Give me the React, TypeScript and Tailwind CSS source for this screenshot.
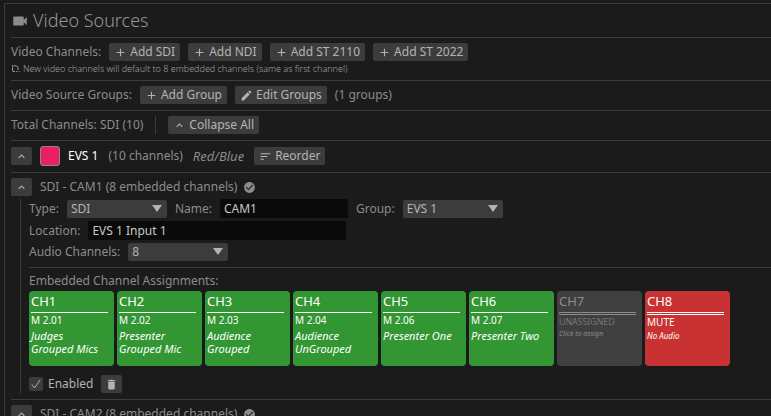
import { useState } from 'react'
import type { ReactNode } from 'react'
import clsx from 'clsx'
import { MdAdd, MdCheckCircle, MdDelete, MdEdit, MdKeyboardArrowUp, MdSort, MdVideocam } from 'react-icons/md'

type CardKind = 'mapped' | 'unassigned' | 'mute'

interface Assignment {
  channel: string
  kind: CardKind
  source: string
  label: string
}

const ASSIGNMENTS: Assignment[] = [
  { channel: 'CH1', kind: 'mapped', source: 'M 2.01', label: 'Judges\nGrouped Mics' },
  { channel: 'CH2', kind: 'mapped', source: 'M 2.02', label: 'Presenter\nGrouped Mic' },
  { channel: 'CH3', kind: 'mapped', source: 'M 2.03', label: 'Audience\nGrouped' },
  { channel: 'CH4', kind: 'mapped', source: 'M 2.04', label: 'Audience\nUnGrouped' },
  { channel: 'CH5', kind: 'mapped', source: 'M 2.06', label: 'Presenter One' },
  { channel: 'CH6', kind: 'mapped', source: 'M 2.07', label: 'Presenter Two' },
  { channel: 'CH7', kind: 'unassigned', source: 'UNASSIGNED', label: 'Click to assign' },
  { channel: 'CH8', kind: 'mute', source: 'MUTE', label: 'No Audio' },
]

const CARD_COLORS: Record<CardKind, string> = {
  mapped:     'bg-[#329632] text-white border-white',
  unassigned: 'bg-[#404040] text-[#8c8c8c] border-[#8c8c8c]',
  mute:       'bg-[#c83232] text-white border-white',
}

const SOURCE_STYLES: Record<CardKind, string> = {
  mapped:     'text-[10px] leading-[14px]',
  unassigned: 'text-[9px] leading-[13px] font-light',
  mute:       'text-[10px] leading-[15px]',
}

const LABEL_STYLES: Record<CardKind, string> = {
  mapped:     'mt-[2px] text-[11px] leading-[13px]',
  unassigned: 'text-[7px] leading-[11px]',
  mute:       'text-[8px] leading-[12px]',
}

function Separator() {
  return <hr className="mt-[6px] mb-[5px] border-t border-[#3c3c3c]" />
}

function Button({ icon, children }: { icon: ReactNode; children: ReactNode }) {
  return (
    <button className="flex h-[18px] shrink-0 items-center gap-[3px] rounded-[2px] bg-[#3c3c3c] px-[5px] text-[#b4b4b4] hover:bg-[#464646]">
      {icon}
      {children}
    </button>
  )
}

function CollapseButton({ label }: { label: string }) {
  return (
    <button aria-label={label} className="flex h-[18px] w-[21px] shrink-0 items-center justify-center rounded-[2px] bg-[#3c3c3c] text-[#b4b4b4]">
      <MdKeyboardArrowUp size={13} />
    </button>
  )
}

function Select({ id, options }: { id: string; options: string[] }) {
  return (
    <div className="relative flex">
      <select id={id} className="h-[18px] w-[100px] appearance-none rounded-[2px] bg-[#3c3c3c] px-1 leading-[18px] text-[#b4b4b4] outline-none">
        {options.map((o) => <option key={o}>{o}</option>)}
      </select>
      <svg viewBox="0 0 10 7" className="pointer-events-none absolute top-[5px] right-[5px] h-[7px] w-[10px] fill-[#b4b4b4]">
        <path d="M0 0h10L5 7z" />
      </svg>
    </div>
  )
}

function AssignmentCard({ item }: { item: Assignment }) {
  return (
    <button className={clsx('flex h-[75px] w-[85px] shrink-0 flex-col items-start rounded-[4px] px-[2px] pt-[2px] text-left', CARD_COLORS[item.kind])}>
      <span className="text-[13px] leading-[17px]">{item.channel}</span>
      <span className={clsx('mt-[2px] w-[77px] shrink-0 border-inherit', item.kind === 'mapped' ? 'border-t' : 'h-[3px] border-y')} />
      <span className={SOURCE_STYLES[item.kind]}>{item.source}</span>
      <span className={clsx('whitespace-pre-line italic', LABEL_STYLES[item.kind])}>{item.label}</span>
    </button>
  )
}

export default function App() {
  const [name, setName]         = useState('CAM1')
  const [location, setLocation] = useState('EVS 1 Input 1')
  const [enabled, setEnabled]   = useState(true)

  return (
    <div className="h-screen overflow-hidden bg-[#1b1b1b] pt-[3px] pl-1 font-['Noto_Sans','Open_Sans',sans-serif] text-[12px] leading-[18px] whitespace-nowrap text-[#8c8c8c]">
      <main className="rounded-tl-[2px] border-t border-l border-[#3c3c3c] pt-[6px] pl-[6px]">
        <h1 className="flex h-[21px] items-center gap-1 text-[18px] leading-[21px] font-light text-[#969696]">
          <MdVideocam size={18} className="text-[#8c8c8c]" />
          Video Sources
        </h1>

        <Separator />

        {/* Add channels */}
        <div className="flex items-center gap-2">
          <span>Video Channels:</span>
          <Button icon={<MdAdd size={13} />}>Add SDI</Button>
          <Button icon={<MdAdd size={13} />}>Add NDI</Button>
          <Button icon={<MdAdd size={13} />}>Add ST 2110</Button>
          <Button icon={<MdAdd size={13} />}>Add ST 2022</Button>
        </div>
        <p className="mt-[2px] flex h-[11px] items-center gap-[3px] text-[9px] leading-[11px] font-light text-[#a0a0a0]">
          <svg viewBox="0 0 9 9" className="h-[9px] w-[9px] fill-none stroke-current">
            <path d="M4 7.500H2L1.500 6V3.500C1.500 1.200 7 1.200 7 3.500V6M5 7.500H6M7.500 7.500H8.500M1 1.500H2" />
          </svg>
          New video channels will default to 8 embedded channels (same as first channel)
        </p>

        <Separator />

        {/* Groups */}
        <div className="flex items-center gap-2">
          <span>Video Source Groups:</span>
          <Button icon={<MdAdd size={13} />}>Add Group</Button>
          <Button icon={<MdEdit size={13} />}>Edit Groups</Button>
          <span>(1 groups)</span>
        </div>

        <Separator />

        <div className="flex items-center gap-3">
          <span>Total Channels: SDI (10)</span>
          <span className="h-[18px] w-px bg-[#3c3c3c]" />
          <Button icon={<MdKeyboardArrowUp size={13} />}>Collapse All</Button>
        </div>

        <Separator />

        {/* Group header */}
        <div className="flex h-5 items-center gap-2">
          <CollapseButton label="Collapse EVS 1" />
          <button aria-label="Group color" className="h-5 w-5 rounded-[3px] border border-[#8c8c8c] bg-[#e91e63]" />
          <div className="flex items-center gap-[10px]">
            <span className="text-white">EVS 1</span>
            <span>(10 channels)</span>
            <span className="text-[13px] italic">Red/Blue</span>
            <Button icon={<MdSort size={13} />}>Reorder</Button>
          </div>
        </div>

        <Separator />

        {/* CAM1 */}
        <section>
          <div className="flex items-center">
            <CollapseButton label="Collapse CAM1" />
            <span className="ml-2">SDI - CAM1 (8 embedded channels)</span>
            <MdCheckCircle size={13} className="ml-[6px]" />
          </div>

          <div className="mt-[3px] ml-[9px] border-l border-[#3c3c3c] pl-2">
            <div className="flex items-center gap-2">
              <label htmlFor="type">Type:</label>
              <Select id="type" options={['SDI', 'NDI', 'ST 2110', 'ST 2022']} />
              <label htmlFor="name">Name:</label>
              <input
                id="name"
                value={name}
                onChange={(e) => setName(e.target.value)}
                className="h-[19px] w-[128px] rounded-[2px] bg-[#0a0a0a] px-1 text-[#c8c8c8] outline-none"
              />
              <label htmlFor="group">Group:</label>
              <Select id="group" options={['EVS 1']} />
            </div>
            <div className="mt-[3px] flex items-center gap-2">
              <label htmlFor="location">Location:</label>
              <input
                id="location"
                value={location}
                onChange={(e) => setLocation(e.target.value)}
                className="h-[19px] w-[258px] rounded-[2px] bg-[#0a0a0a] px-1 text-[#c8c8c8] outline-none"
              />
            </div>
            <div className="mt-[3px] flex items-center gap-2">
              <label htmlFor="audio">Audio Channels:</label>
              <Select id="audio" options={['8', '16']} />
            </div>

            <Separator />

            <h2 className="h-[18px] leading-[16px]">Embedded Channel Assignments:</h2>
            <div className="flex gap-[3px]">
              {ASSIGNMENTS.map((item) => <AssignmentCard key={item.channel} item={item} />)}
            </div>

            <div className="mt-[9px] flex items-center gap-2">
              <label className="relative flex items-center gap-[5px] text-[#b4b4b4]">
                <input
                  type="checkbox"
                  checked={enabled}
                  onChange={(e) => setEnabled(e.target.checked)}
                  className="peer h-[14px] w-[14px] appearance-none rounded-[2px] bg-[#3c3c3c]"
                />
                <svg viewBox="0 0 14 14" className="pointer-events-none absolute left-0 hidden h-[14px] w-[14px] fill-none stroke-[#b4b4b4] peer-checked:block">
                  <path d="M3 7.500L5.500 11L11 3" />
                </svg>
                Enabled
              </label>
              <button aria-label="Delete channel" className="flex h-[18px] w-[21px] items-center justify-center rounded-[2px] bg-[#3c3c3c] text-[#b4b4b4]">
                <MdDelete size={13} />
              </button>
            </div>
          </div>
        </section>

        <Separator />

        {/* CAM2 */}
        <section className="flex items-center">
          <CollapseButton label="Collapse CAM2" />
          <span className="ml-2">SDI - CAM2 (8 embedded channels)</span>
          <MdCheckCircle size={13} className="ml-[6px]" />
        </section>
      </main>
    </div>
  )
}
